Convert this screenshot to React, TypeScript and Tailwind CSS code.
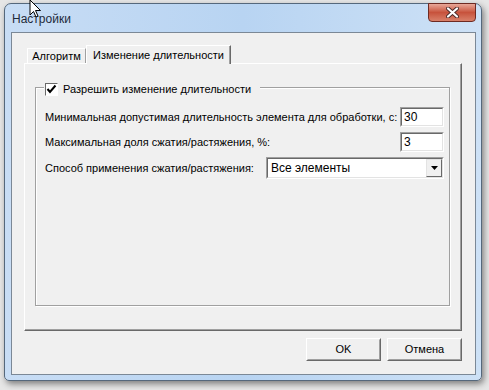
import React from 'react';

const font = { fontFamily: '"Liberation Sans", Arial, sans-serif' };

const Field: React.FC<{ value: string }> = ({ value }) => (
  <div className="shrink-0 w-[44px] h-[20px] border border-t-[#a0a0a0] border-l-[#a0a0a0] border-r-white border-b-white">
    <div className="h-full bg-white border border-t-[#696969] border-l-[#696969] border-r-[#e3e3e3] border-b-[#e3e3e3] pl-[2px] text-[12px] leading-[17px] text-black">
      {value}
    </div>
  </div>
);

const Button: React.FC<{ label: string }> = ({ label }) => (
  <div className="w-[75px] h-[23px] border border-t-white border-l-white border-r-[#696969] border-b-[#696969]">
    <div className="h-full flex items-center justify-center border border-t-[#f0f0f0] border-l-[#f0f0f0] border-r-[#a0a0a0] border-b-[#a0a0a0] text-[11px] text-black">
      {label}
    </div>
  </div>
);

export default function App() {
  return (
    <div className="relative w-[489px] h-[390px] bg-[#e6e6e6] pt-[3px] pl-[4px] overflow-hidden" style={font}>
      {/* window */}
      <div className="w-[478px] h-[378px] rounded-t-[7px] rounded-b-[5px] border border-[#55687c] bg-gradient-to-r from-[#c8ddf5] via-[#b8d4f2] to-[#cde1f6] pt-[28px] pl-[6px] pr-[5px] pb-[5px] flex flex-col relative shadow-[2px_3px_6px_rgba(0,0,0,0.45)]">
        <div className="absolute left-[7px] top-[6px] text-[12px] text-[#1e2a3a]">Настройки</div>
        <div className="absolute right-[5px] -top-px w-[48px] h-[19px] rounded-b-[4px] border border-[#6e2a22] bg-gradient-to-b from-[#e8a798] via-[#c7523c] to-[#d8806a] flex items-center justify-center">
          <svg width="13" height="11" viewBox="0 0 13 11">
            <path d="M2 1.5 L11 9.5 M11 1.5 L2 9.5" stroke="#4a2a28" strokeWidth="4" strokeLinecap="round" />
            <path d="M2 1.5 L11 9.5 M11 1.5 L2 9.5" stroke="#ffffff" strokeWidth="2.2" strokeLinecap="round" />
          </svg>
        </div>

        {/* client */}
        <div className="flex-1 border border-[#7b8896] bg-[#f0f0f0] pt-[12px] pl-[12px] flex flex-col">
          {/* tab strip */}
          <div className="flex h-[18px] items-end text-[11px] text-black">
            <div className="ml-[3px] w-[59px] h-[15px] border border-b-0 border-t-white border-l-white border-r-[#a0a0a0] flex items-center justify-center leading-none">
              Алгоритм
            </div>
            <div className="relative z-10 -mb-px w-[145px] h-[19px] bg-[#f0f0f0] border border-b-0 border-t-white border-l-white border-r-[#696969] shadow-[inset_-1px_0_0_#a0a0a0] flex items-center justify-center leading-none">
              Изменение длительности
            </div>
          </div>

          {/* tab panel */}
          <div className="w-[438px] h-[268px] border border-t-white border-l-white border-r-[#696969] border-b-[#696969] shadow-[inset_-1px_-1px_0_#a0a0a0] pl-[10px] pt-[23px]">
            {/* group box */}
            <div className="relative w-[415px] h-[219px] border border-[#a0a0a0] shadow-[1px_1px_0_#ffffff,inset_1px_1px_0_#ffffff] pt-[19px] pl-[9px] pr-[5px] flex flex-col gap-[5px] text-[11px] text-black whitespace-nowrap">
              <div className="absolute -top-[7px] left-[8px] bg-[#f0f0f0] px-[1px] flex items-center gap-[5px]">
                <div className="w-[13px] h-[13px] bg-white border border-t-[#696969] border-l-[#696969] border-r-white border-b-white flex items-center justify-center">
                  <svg width="11" height="11" viewBox="0 0 11 11">
                    <path d="M1.5 5 L4 8 L9.5 1.5" stroke="#000" strokeWidth="2" fill="none" />
                  </svg>
                </div>
                <span className="pr-[8px]">Разрешить изменение длительности</span>
              </div>

              <div className="flex items-center justify-between">
                <span>Минимальная допустимая длительность элемента для обработки, с:</span>
                <Field value="30" />
              </div>
              <div className="flex items-center justify-between">
                <span>Максимальная доля сжатия/растяжения, %:</span>
                <Field value="3" />
              </div>
              <div className="flex items-center justify-between">
                <span>Способ применения сжатия/растяжения:</span>
                <div className="shrink-0 w-[178px] h-[22px] border border-t-[#a0a0a0] border-l-[#a0a0a0] border-r-white border-b-white">
                  <div className="h-full bg-white border border-t-[#696969] border-l-[#696969] border-r-[#e3e3e3] border-b-[#e3e3e3] flex items-center justify-between">
                    <span className="pl-[3px] text-[12px]">Все элементы</span>
                    <div className="w-[16px] h-[18px] bg-[#f0f0f0] border border-t-[#e3e3e3] border-l-[#e3e3e3] border-r-[#696969] border-b-[#696969] flex items-center justify-center">
                      <svg width="7" height="4" viewBox="0 0 7 4">
                        <path d="M0 0 H7 L3.5 4 Z" fill="#000" />
                      </svg>
                    </div>
                  </div>
                </div>
              </div>
            </div>
          </div>

          {/* buttons */}
          <div className="w-[438px] mt-[7px] flex justify-end gap-[6px]">
            <Button label="OK" />
            <Button label="Отмена" />
          </div>
        </div>
      </div>

      {/* mouse pointer */}
      <svg className="absolute left-[29px] top-0" width="14" height="18" viewBox="0 0 14 18">
        <path d="M1 0 L1 15 L4.5 11.5 L7 17 L9 16 L6.5 10.5 L11.5 10.5 Z" fill="#ffffff" stroke="#000" strokeWidth="1" />
      </svg>
    </div>
  );
}
